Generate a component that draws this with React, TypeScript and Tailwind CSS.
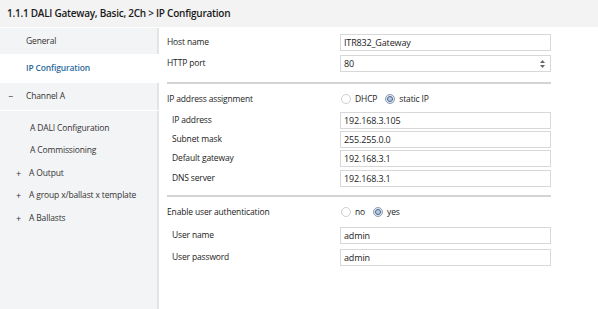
import React from "react";

const font = { fontFamily: '"Open Sans", "Noto Sans", sans-serif' };

function Input({ value, spinner }: { value: string; spinner?: boolean }) {
  return (
    <div className="w-[211px] h-[17px] border border-[#d8d8d8] bg-white flex items-center pl-[3px] pr-[5px] text-[9px] tracking-[-0.15px] text-[#222]">
      <span className="flex-1">{value}</span>
      {spinner && (
        <div className="flex flex-col gap-[2px] items-center">
          <svg width="5" height="3" viewBox="0 0 5 3"><path d="M0 3 L2.5 0 L5 3 Z" fill="#666" /></svg>
          <svg width="5" height="3" viewBox="0 0 5 3"><path d="M0 0 L2.5 3 L5 0 Z" fill="#666" /></svg>
        </div>
      )}
    </div>
  );
}

function Radio({ checked }: { checked?: boolean }) {
  if (checked)
    return (
      <span className="w-[10px] h-[10px] rounded-full border border-[#8d9db5] bg-[#dfe7f2] flex items-center justify-center">
        <span className="w-[6px] h-[6px] rounded-full border border-[#4e6584] bg-[#b9cbe3]" />
      </span>
    );
  return <span className="w-[10px] h-[10px] rounded-full border border-[#cfcfcf] bg-white" />;
}

function FieldRow({ label, value, indent, spinner }: { label: string; value: string; indent?: boolean; spinner?: boolean }) {
  return (
    <div className="flex items-center h-[17px]">
      <div className={`w-[173px] ${indent ? "pl-[5px]" : ""}`}>{label}</div>
      <Input value={value} spinner={spinner} />
    </div>
  );
}

function RadioRow({ label, a, b }: { label: string; a: string; b: string }) {
  return (
    <div className="flex items-center h-[16px]">
      <div className="w-[174px]">{label}</div>
      <div className="flex items-center">
        <Radio />
        <span className="ml-[4px] mr-[8px]">{a}</span>
        <Radio checked />
        <span className="ml-[4px]">{b}</span>
      </div>
    </div>
  );
}

export default function App() {
  return (
    <div className="w-[598px] h-[309px] flex flex-col bg-white text-[8.5px] tracking-[-0.15px] text-[#222] overflow-hidden" style={font}>
      <div className="h-[27px] bg-[#f3f3f3] flex items-center pl-[7px] text-[10px] tracking-[-0.25px] font-semibold text-[#1a1a1a] shrink-0">
        1.1.1 DALI Gateway, Basic, 2Ch &gt; IP Configuration
      </div>
      <div className="flex flex-1 min-h-0">
        <div className="w-[159px] flex flex-col gap-px pt-px bg-white shrink-0">
          <div className="h-[26px] bg-[#f3f4f6] border-r-2 border-[#e4e4e4] flex items-center pl-[26px] text-[#333]">General</div>
          <div className="h-[27px] bg-white flex items-center pl-[26px] text-[#2c6a9c] font-semibold">IP Configuration</div>
          <div className="h-[27px] bg-[#f3f4f6] border-r-2 border-[#e4e4e4] flex items-center text-[#333]">
            <span className="w-[26px] pl-[8px] text-[9px]">−</span>
            <span>Channel A</span>
          </div>
          <div className="flex-1 bg-[#f3f4f6] border-r-2 border-[#e4e4e4] flex flex-col pt-[6px] text-[#333]">
            {[
              ["", "A DALI Configuration"],
              ["", "A Commissioning"],
              ["+", "A Output"],
              ["+", "A group x/ballast x template"],
              ["+", "A Ballasts"],
            ].map(([p, t]) => (
              <div key={t} className="h-[22.5px] flex items-center">
                <span className="w-[29px] pl-[16px] text-[9px]">{p}</span>
                <span className={p ? "" : "pl-[1px]"}>{t}</span>
              </div>
            ))}
          </div>
        </div>
        <div className="flex-1 pl-[8px] pt-[7px] flex flex-col">
          <FieldRow label="Host name" value="ITR832_Gateway" />
          <div className="h-[4px]" />
          <FieldRow label="HTTP port" value="80" spinner />
          <div className="w-[384px] h-[2px] bg-[#d4d4d4] mt-[10px]" />
          <div className="h-[7px]" />
          <RadioRow label="IP address assignment" a="DHCP" b="static IP" />
          <div className="h-[5px]" />
          <FieldRow label="IP address" value="192.168.3.105" indent />
          <div className="h-[2px]" />
          <FieldRow label="Subnet mask" value="255.255.0.0" indent />
          <div className="h-[2px]" />
          <FieldRow label="Default gateway" value="192.168.3.1" indent />
          <div className="h-[3px]" />
          <FieldRow label="DNS server" value="192.168.3.1" indent />
          <div className="w-[384px] h-[2px] bg-[#d4d4d4] mt-[8px]" />
          <div className="h-[7px]" />
          <RadioRow label="Enable user authentication" a="no" b="yes" />
          <div className="h-[7px]" />
          <FieldRow label="User name" value="admin" indent />
          <div className="h-[5px]" />
          <FieldRow label="User password" value="admin" indent />
        </div>
      </div>
    </div>
  );
}
